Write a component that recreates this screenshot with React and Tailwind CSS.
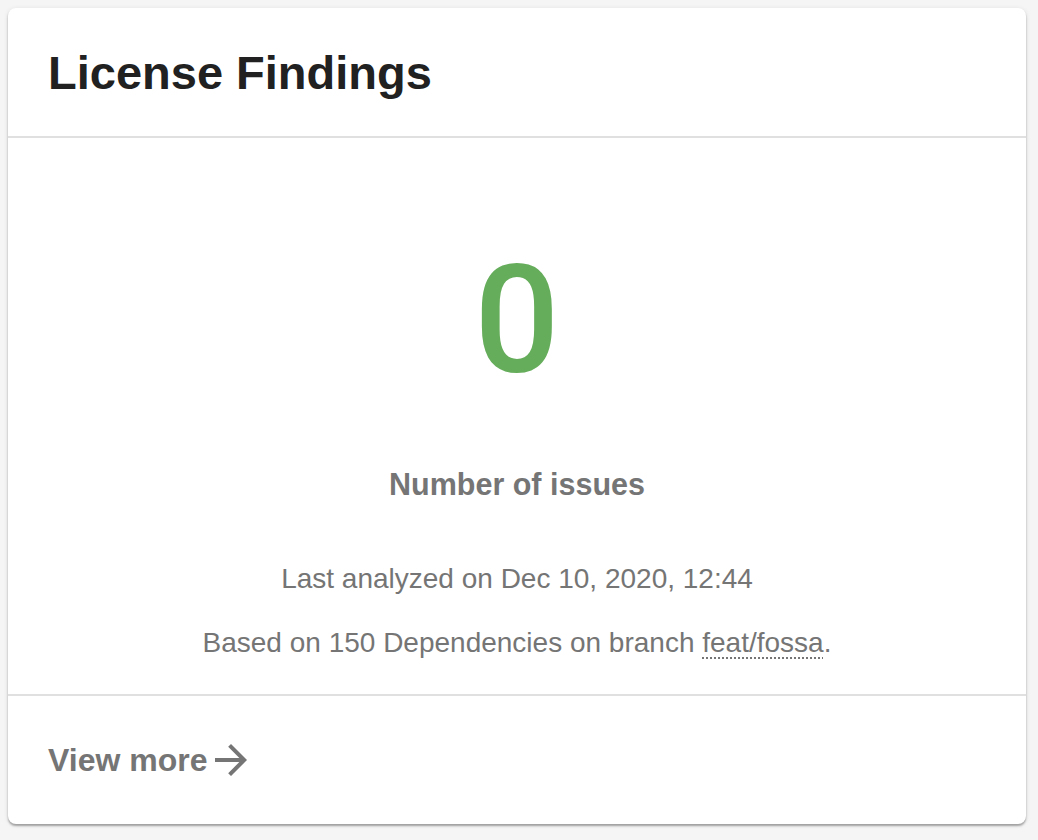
import React from "react";

const ArrowForward = () => (
  <svg width="48" height="48" viewBox="0 0 24 24" fill="currentColor" xmlns="http://www.w3.org/2000/svg">
    <path d="M12 4l-1.41 1.41L16.17 11H4v2h12.17l-5.58 5.59L12 20l8-8z" />
  </svg>
);

const App = () => {
  return (
    <div className="min-h-[840px] bg-[#f5f5f5] p-[8px] pr-[12px] font-['Liberation_Sans',Arial,sans-serif]">
      <div className="bg-white rounded-[8px] h-[816px] flex flex-col shadow-[0_2px_2px_rgba(0,0,0,0.3),0_1px_5px_rgba(0,0,0,0.1)]">
        {/* Header */}
        <div className="h-[130px] flex items-center px-[40px] border-b-2 border-[#e0e0e0]">
          <h2 className="text-[47px] leading-none font-bold text-[#212121]">License Findings</h2>
        </div>

        {/* Body */}
        <div className="h-[558px] flex flex-col items-center pt-[103px] border-b-2 border-[#e0e0e0]">
          <div className="text-[150px] leading-[160px] font-medium font-['Roboto',sans-serif] text-[#66ad5b]">0</div>
          <div className="mt-[65px] text-[30.5px] leading-[36px] font-bold text-[#757575]">Number of issues</div>
          <div className="mt-[57px] text-[28px] leading-[40px] text-[#757575]">Last analyzed on Dec 10, 2020, 12:44</div>
          <div className="mt-[24px] text-[28px] leading-[40px] text-[#757575]">
            Based on 150 Dependencies on branch{" "}
            <span className="underline decoration-dotted decoration-2 underline-offset-[5px]">feat/fossa</span>.
          </div>
        </div>

        {/* Footer */}
        <div className="flex-1 flex items-center px-[40px]">
          <a className="flex items-center text-[32px] font-bold text-[#757575] cursor-pointer">
            View more
            <ArrowForward />
          </a>
        </div>
      </div>
    </div>
  );
};

export default App;
